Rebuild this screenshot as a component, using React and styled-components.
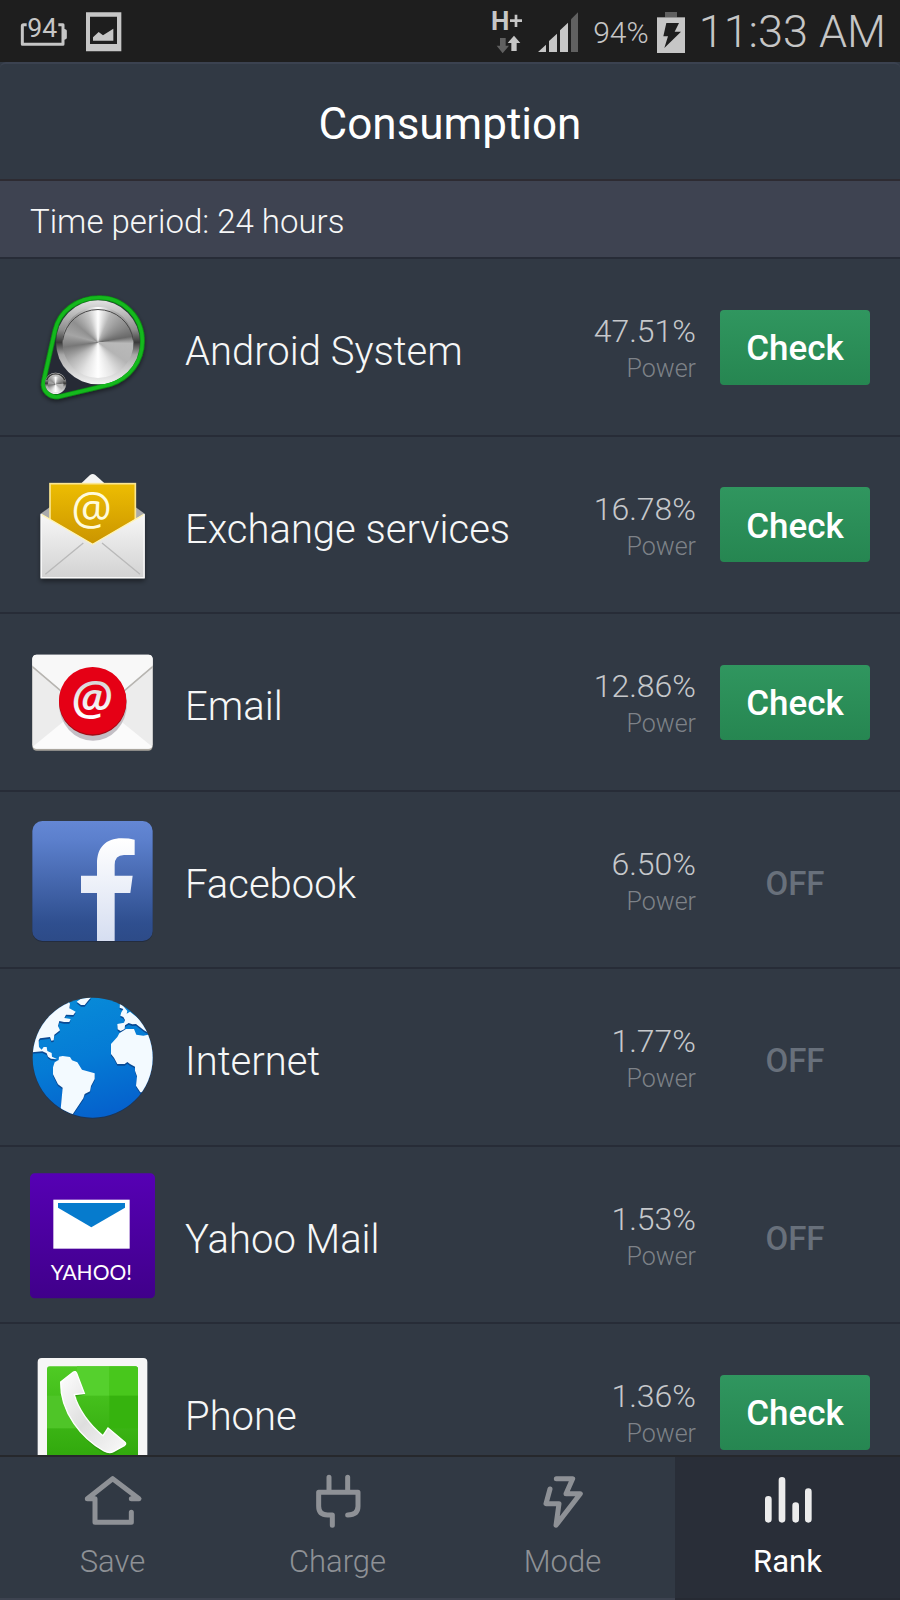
import React from 'react';
import styled, { createGlobalStyle, ThemeProvider } from 'styled-components';

const theme = {
  bg: '#313944',
  barBg: '#3e4351',
  activeBg: '#292e38',
  divider: '#272c37',
  text: '#f6f7f7',
  silver: '#c6c8cb',
  muted: '#7e8288',
  nav: '#8e9196',
  status: '#c6c6c6'
};

const GlobalStyle = createGlobalStyle`
  * {
    box-sizing: border-box;
  }

  body {
    margin: 0;
    font-family: Roboto, "Liberation Sans", sans-serif;
    background-color: #313944;
  }
`;

const Screen = styled.div`
  display: flex;
  flex-direction: column;
  height: 100vh;
  overflow: hidden;
  background-color: ${props => props.theme.bg};
  color: ${props => props.theme.text};
`;

const StyledStatusBar = styled.div`
  display: flex;
  justify-content: space-between;
  flex-shrink: 0;
  height: 62px;
  padding: 2px 14px 0 20px;
  background-color: #1e1e1e;
  color: ${props => props.theme.status};

  svg {
    display: block;
    flex-shrink: 0;
  }
`;

const StatusGroup = styled.div`
  display: flex;
  align-items: center;
  gap: ${props => props.$gap}px;
`;

const BatteryLevel = styled.span`
  padding-top: 2px;
  font-size: 30px;
  line-height: 36px;
  font-weight: 300;
`;

const BatteryGroup = styled.div`
  display: flex;
  align-items: center;
  gap: 8px;
`;

const Clock = styled.time`
  font-size: 45px;
  line-height: 56px;
  font-weight: 300;
  white-space: nowrap;
`;

const Header = styled.header`
  display: flex;
  align-items: center;
  justify-content: center;
  flex-shrink: 0;
  height: 119px;
  padding-top: 4px;
  border-top: 2px solid #3b4250;
  border-bottom: 2px solid #2d2b32;
  border-radius: 6px 6px 0 0;

  h1 {
    margin: 0;
    font-size: 44px;
    line-height: 56px;
    font-weight: 400;
    color: white;
  }
`;

const Period = styled.div`
  flex-shrink: 0;
  padding: 21px 30px 15px;
  border-bottom: 2px solid ${props => props.theme.divider};
  background-color: ${props => props.theme.barBg};
  font-size: 33px;
  line-height: 40px;
  font-weight: 300;
`;

const AppList = styled.ul`
  display: grid;
  grid-auto-rows: 178px 177px;
  align-content: start;
  flex: 1;
  min-height: 0;
  margin: 0;
  padding: 0;
  overflow-y: auto;
  scrollbar-width: none;
  list-style: none;
`;

const StyledAppRow = styled.li`
  display: flex;
  align-items: center;
  padding: 0 30px 0 28px;
  border-bottom: 2px solid ${props => props.theme.divider};

  > svg {
    flex-shrink: 0;
    width: 128px;
    height: 128px;
  }
`;

const AppName = styled.span`
  flex: 1;
  padding: 10px 0 0 29px;
  font-size: 40px;
  line-height: 48px;
  font-weight: 300;
`;

const Usage = styled.div`
  display: flex;
  flex-direction: column;
  align-items: flex-end;
  margin-right: 24px;
  padding-top: 6px;
  font-weight: 300;
`;

const Percent = styled.span`
  font-size: 32px;
  line-height: 38px;
  color: ${props => props.theme.silver};
`;

const UsageLabel = styled.span`
  font-size: 25px;
  line-height: 38px;
  color: ${props => props.theme.muted};
`;

const CheckButton = styled.button`
  width: 150px;
  height: 75px;
  padding: 4px 0 0;
  border: none;
  border-radius: 4px;
  background: linear-gradient(#30965f, #268651);
  font-family: inherit;
  font-size: 35px;
  line-height: 40px;
  font-weight: 500;
  color: white;
  cursor: pointer;
`;

const OffLabel = styled.span`
  width: 150px;
  padding-top: 8px;
  font-size: 33px;
  line-height: 40px;
  font-weight: 500;
  text-align: center;
  color: #68707b;
`;

const StyledTabBar = styled.nav`
  display: grid;
  grid-template-columns: repeat(4, 1fr);
  flex-shrink: 0;
  border-top: 2px solid #26282c;
`;

const Tab = styled.a`
  display: flex;
  flex-direction: column;
  align-items: center;
  height: 143px;
  padding-top: 17px;
  border-bottom: 2px solid ${props => (props.$active ? '#262a33' : '#3d4350')};
  background-color: ${props => (props.$active ? props.theme.activeBg : props.theme.bg)};
  color: ${props => (props.$active ? 'white' : props.theme.nav)};
  font-size: 31px;
  line-height: 36px;
  font-weight: ${props => (props.$active ? 400 : 300)};
  text-decoration: none;

  svg {
    width: 60px;
    height: 55px;
    margin-bottom: 15px;
    fill: none;
    stroke: ${props => (props.$active ? '#ececec' : props.theme.nav)};
    stroke-width: ${props => (props.$active ? 20 : 15)}px;
    stroke-linecap: round;
    stroke-linejoin: round;
  }
`;

const BrushedMetal = styled.div`
  height: 100%;
  border-radius: 50%;
  background: conic-gradient(
    #fff 0deg, #b5b5b5 25deg, #888 60deg, #696969 80deg, #b9b9b9 92deg,
    #b4b4b4 125deg, #e5e5e5 155deg, #fff 180deg, #e4e4e4 205deg, #b4b4b4 235deg,
    #777 262deg, #a5a5a5 285deg, #8f8f8f 310deg, #c4c4c4 340deg, #fff 360deg
  );
`;

const AndroidSystemIcon = () => (
  <svg viewBox="24 8 384 384" aria-hidden="true">
    <defs>
      <linearGradient id="dialRim" x1="0" y1="0" x2="0" y2="1">
        <stop offset="0" stopColor="#e2e2e2" />
        <stop offset="0.35" stopColor="#8d8d8d" />
        <stop offset="0.5" stopColor="#3a3a3a" />
        <stop offset="0.65" stopColor="#a8a8a8" />
        <stop offset="1" stopColor="#f4f4f4" />
      </linearGradient>
      <filter id="dialShadow" x="-20%" y="-20%" width="140%" height="140%">
        <feDropShadow dx="0" dy="6" stdDeviation="7" floodColor="#000" floodOpacity="0.5" />
      </filter>
    </defs>
    <path
      d="M105 150C118 92 172 52 238 52C310 52 367 110 367 182C367 243 328 294 271 312L120 348C90 355 65 332 71 302Z"
      fill="#252c36"
      stroke="#0b8d12"
      strokeWidth="15"
      filter="url(#dialShadow)"
    />
    <circle cx="234" cy="186" r="126" fill="url(#dialRim)" />
    <foreignObject x="127" y="79" width="214" height="214">
      <BrushedMetal />
    </foreignObject>
    <path d="M128 180A107 107 0 0 1 340 180" fill="none" stroke="#484848" strokeWidth="3" />
    <path
      d="M105 150C118 92 172 52 238 52C310 52 367 110 367 182C367 243 328 294 271 312L120 348C90 355 65 332 71 302Z"
      fill="none"
      stroke="#14b91d"
      strokeWidth="10"
    />
    <circle cx="107" cy="309" r="32" fill="url(#dialRim)" />
    <foreignObject x="83" y="288" width="48" height="48">
      <BrushedMetal />
    </foreignObject>
    <path d="M80 299A29 29 0 0 1 134 299" fill="none" stroke="#333" strokeWidth="4" />
  </svg>
);

const ExchangeIcon = () => (
  <svg viewBox="24 0 384 384" aria-hidden="true">
    <defs>
      <linearGradient id="letterGold" x1="0" y1="0" x2="0" y2="1">
        <stop offset="0" stopColor="#edbd02" />
        <stop offset="1" stopColor="#c99300" />
      </linearGradient>
      <linearGradient id="envelopeGray" x1="0" y1="0" x2="0" y2="1">
        <stop offset="0" stopColor="#f7f7f7" />
        <stop offset="1" stopColor="#d2d2d2" />
      </linearGradient>
      <filter id="envelopeShadow" x="-20%" y="-20%" width="140%" height="140%">
        <feDropShadow dx="0" dy="9" stdDeviation="8" floodColor="#000" floodOpacity="0.45" />
      </filter>
    </defs>
    <path d="M62 158L90 138H346L374 158V352H62Z" fill="#a9aaac" filter="url(#envelopeShadow)" />
    <path d="M176 74L210 42Q218 36 226 42L262 74Z" fill="#f4f4f4" />
    <rect x="90" y="68" width="256" height="190" fill="url(#letterGold)" stroke="#fbe691" strokeWidth="5" />
    <text x="215" y="192" fontSize="136" fontFamily="Open Sans, sans-serif" textAnchor="middle" fill="#fffbdc">@</text>
    <path d="M62 158L218 250L374 158V352H62Z" fill="url(#envelopeGray)" />
    <path d="M76 340L190 246M360 340L246 246" fill="none" stroke="#b9b9b9" strokeWidth="4" />
    <path d="M64 160L218 250L372 160" fill="none" stroke="#fff3b4" strokeWidth="4" />
    <path d="M64 160V350H372V160" fill="none" stroke="#f8f8f8" strokeWidth="4" />
  </svg>
);

const EmailIcon = () => (
  <svg viewBox="24 -8 384 384" aria-hidden="true">
    <defs>
      <linearGradient id="atSilver" x1="0" y1="0" x2="0" y2="1">
        <stop offset="0.2" stopColor="#d2d2d2" />
        <stop offset="0.8" stopColor="#ffffff" />
      </linearGradient>
    </defs>
    <rect x="37" y="44" width="361" height="286" rx="13" fill="#aaa69e" />
    <rect x="37" y="42" width="361" height="282" rx="13" fill="#ececec" />
    <path d="M38 318L170 210H264L397 318Q394 324 385 324H50Q41 324 38 318Z" fill="#fbfbfb" />
    <path d="M37 78L190 208H245L398 78" fill="none" stroke="#b7b5b1" strokeWidth="5" />
    <path d="M37 74V55Q37 42 50 42H385Q398 42 398 55V74L245 204H190Z" fill="#f8f8f8" />
    <ellipse cx="219" cy="190" rx="102" ry="110" fill="#c3bfc5" />
    <circle cx="218" cy="184" r="101" fill="#a30a14" />
    <circle cx="218" cy="180" r="101" fill="#e50015" />
    <text
      x="215"
      y="222"
      fontSize="142"
      fontFamily="Open Sans, sans-serif"
      fontStyle="italic"
      fontWeight="600"
      textAnchor="middle"
      fill="url(#atSilver)"
    >
      @
    </text>
  </svg>
);

const FacebookIcon = () => (
  <svg viewBox="24 15 384 384" aria-hidden="true">
    <defs>
      <linearGradient id="fbBlue" x1="0" y1="0" x2="0" y2="1">
        <stop offset="0" stopColor="#6487d4" />
        <stop offset="0.15" stopColor="#5c80cd" />
        <stop offset="0.85" stopColor="#2f4f8f" />
        <stop offset="1" stopColor="#2d4b88" />
      </linearGradient>
      <linearGradient id="fbWhite" x1="0" y1="0" x2="0" y2="1">
        <stop offset="0" stopColor="#ffffff" />
        <stop offset="1" stopColor="#d6def1" />
      </linearGradient>
    </defs>
    <rect x="37" y="32" width="361" height="361" rx="30" fill="#232c3e" />
    <rect x="37" y="30" width="361" height="360" rx="30" fill="url(#fbBlue)" />
    <path
      d="M231 390V246H183V194H231V158C231 110 257 82 305 82Q328 82 344 86V132H312Q284 132 284 162V194H338L331 246H284V390Z"
      fill="url(#fbWhite)"
    />
  </svg>
);

const Continents = () => (
  <>
    <path d="M30 30H135L150 54L148 68L167 78L160 88L138 87L133 97L152 100L148 109H132L118 106L114 121L120 134L103 147L101 164L94 165L90 154L60 158L56 164L57 184L65 192L71 184L80 184L82 196L95 202L96 213L111 220L93 219L84 213L80 203L67 197L30 200Z" />
    <path d="M99 245L104 230L116 223L117 213L128 211L150 214L156 224L172 230L186 252L224 263V280L213 301L210 317L194 325L190 338L155 390L122 370L128 306L114 296L99 266Z" />
    <path d="M300 50L314 66L322 76L320 84L330 78L370 110L400 150L372 134L348 115L337 116L326 112L315 119L314 130L302 136L293 131L292 115L312 111L315 103L310 94L301 90L304 80L310 70L299 66Z" />
    <path d="M273 175L292 154L298 143L318 130L342 130L349 147L370 150L420 140V320H361L348 300L351 272L345 255V243L330 235L322 229L314 235L292 235L282 216L273 205Z" />
    <path d="M170 48L190 34H214L203 47L194 58H183Z" />
  </>
);

const InternetIcon = () => (
  <svg viewBox="24 22 384 384" aria-hidden="true">
    <defs>
      <linearGradient id="ocean" x1="0.3" y1="0" x2="0.6" y2="1">
        <stop offset="0" stopColor="#088bd8" />
        <stop offset="0.5" stopColor="#057bd5" />
        <stop offset="1" stopColor="#0560cc" />
      </linearGradient>
      <clipPath id="globe">
        <circle cx="218" cy="216" r="180" />
      </clipPath>
    </defs>
    <circle cx="218" cy="219" r="180" fill="#1b3558" />
    <circle cx="218" cy="216" r="180" fill="url(#ocean)" />
    <g clipPath="url(#globe)">
      <g fill="#0a4a94" transform="translate(0 5)">
        <Continents />
      </g>
      <g fill="#f3faff">
        <Continents />
      </g>
    </g>
  </svg>
);

const YahooIcon = () => (
  <svg viewBox="24 30 384 384" aria-hidden="true">
    <defs>
      <linearGradient id="yahooPurple" x1="0" y1="0" x2="0" y2="1">
        <stop offset="0" stopColor="#5600b4" />
        <stop offset="1" stopColor="#40008a" />
      </linearGradient>
    </defs>
    <rect x="30" y="37" width="375" height="375" rx="14" fill="url(#yahooPurple)" />
    <rect x="100" y="116" width="229" height="147" fill="#fff" />
    <path d="M114 126H315V140L214 199L114 140Z" fill="#067bcd" />
    <text x="214" y="358" fontSize="63" fontFamily="Lato, sans-serif" textAnchor="middle" fill="#fff">
      YAHOO!
    </text>
  </svg>
);

const PhoneIcon = () => (
  <svg viewBox="24 22 384 384" aria-hidden="true">
    <defs>
      <linearGradient id="phoneGreen" x1="0" y1="0" x2="0" y2="1">
        <stop offset="0" stopColor="#4fcb24" />
        <stop offset="1" stopColor="#2fa60b" />
      </linearGradient>
      <linearGradient id="handset" x1="0" y1="0" x2="1" y2="1">
        <stop offset="0" stopColor="#ffffff" />
        <stop offset="0.5" stopColor="#dedede" />
        <stop offset="1" stopColor="#fafafa" />
      </linearGradient>
    </defs>
    <rect x="53" y="52" width="329" height="340" rx="12" fill="#f6f6f6" />
    <rect x="81" y="77" width="273" height="290" rx="8" fill="url(#phoneGreen)" />
    <rect x="171" y="77" width="97" height="88" fill="#55d02d" />
    <path d="M268 77H346Q354 77 354 85V165H268Z" fill="#48c71c" />
    <rect x="268" y="165" width="86" height="98" fill="#36b30e" />
    <rect x="81" y="165" width="90" height="98" fill="#4fc528" />
    <path
      d="M123 130L168 98L194 162L166 168C178 210 210 258 250 292L268 268L318 312L284 340Q268 346 252 338C186 300 130 220 123 130Z"
      fill="#248a08"
      opacity="0.6"
    />
    <path
      d="M122 124L160 94Q167 90 170 98L193 158L163 162C174 204 208 252 249 285L264 262L314 304Q320 309 314 314L280 333Q268 339 252 331C186 294 120 216 122 124Z"
      fill="url(#handset)"
      stroke="#fff"
      strokeWidth="4"
    />
  </svg>
);

const StatusBar = () => (
  <StyledStatusBar>
    <StatusGroup $gap={17}>
      <svg width="48" height="40" viewBox="60 36 144 120" aria-hidden="true">
        <path
          d="M80 74H71Q67 74 67 78V133H189V74H175M189 90L196 93V113L189 117"
          fill="none"
          stroke="#c6c6c6"
          strokeWidth="9"
          strokeLinejoin="round"
        />
        <text x="127" y="112" fontSize="80" fontFamily="Roboto, sans-serif" textAnchor="middle" fill="#c6c6c6">94</text>
      </svg>
      <svg width="37" height="40" viewBox="255 36 111 120" aria-hidden="true">
        <path d="M258 37H364V154H258ZM270 50V132H351V50Z" fill="#c6c6c6" fillRule="evenodd" />
        <path d="M279 122V112L296 96L309 106L340 86V122Z" fill="#c6c6c6" />
      </svg>
    </StatusGroup>
    <StatusGroup $gap={14}>
      <svg width="35" height="60" viewBox="120 6 105 180" aria-hidden="true">
        <text x="126" y="90" fontSize="78" fontFamily="Roboto, sans-serif" fontWeight="700" fill="#c6c6c6">H</text>
        <path d="M183 62H219M201 44V81" stroke="#c6c6c6" strokeWidth="8" />
        <path d="M153 114H170V137H180L161 160L143 137H153Z" fill="#606060" />
        <path d="M187 153V129H176L195 107L214 129H203V153Z" fill="#c6c6c6" />
      </svg>
      <svg width="41" height="40" viewBox="264 36 123 120" aria-hidden="true">
        <path d="M264 156L288 134V156ZM297 156V123L321 101V156ZM330 156V91L354 68V156Z" fill="#c6c6c6" />
        <path d="M363 156V58L384 37V156Z" fill="#606060" />
      </svg>
      <BatteryGroup>
        <BatteryLevel>94%</BatteryLevel>
        <svg width="28" height="41" viewBox="618 33 84 123" aria-hidden="true">
          <path d="M642 33H678V49H642Z" fill="#606060" />
          <path d="M618 49H702V156H618Z" fill="#c6c6c6" />
          <path d="M646 66H684L671 92H690L640 141L651 106H637Z" fill="#1e1e1e" />
        </svg>
      </BatteryGroup>
      <Clock>11:33 AM</Clock>
    </StatusGroup>
  </StyledStatusBar>
);

const AppRow = ({ app: { name, percent, canCheck, Icon } }) => (
  <StyledAppRow>
    <Icon />
    <AppName>{name}</AppName>
    <Usage>
      <Percent>{percent}</Percent>
      <UsageLabel>Power</UsageLabel>
    </Usage>
    {canCheck ? <CheckButton type="button">Check</CheckButton> : <OffLabel>OFF</OffLabel>}
  </StyledAppRow>
);

const SaveIcon = () => (
  <svg viewBox="247 102 180 165" aria-hidden="true">
    <path d="M392 217V247H283V176H260L336 116L415 176H392" />
  </svg>
);

const ChargeIcon = () => (
  <svg viewBox="922 102 180 165" aria-hidden="true">
    <path d="M985 112V157M1041 112V157M995 256V225H981Q954 225 954 199V157H1072V199Q1072 225 1041 225" />
  </svg>
);

const ModeIcon = () => (
  <svg viewBox="247 102 180 165" aria-hidden="true">
    <path d="M298 147L286 191H325L316 256L389 161H346L366 116H317" />
  </svg>
);

const RankIcon = () => (
  <svg viewBox="922 102 180 165" aria-hidden="true">
    <path d="M953 178V238M994 121V238M1035 197V238M1073 155V238" />
  </svg>
);

const apps = [
  { name: 'Android System', percent: '47.51%', canCheck: true, Icon: AndroidSystemIcon },
  { name: 'Exchange services', percent: '16.78%', canCheck: true, Icon: ExchangeIcon },
  { name: 'Email', percent: '12.86%', canCheck: true, Icon: EmailIcon },
  { name: 'Facebook', percent: '6.50%', canCheck: false, Icon: FacebookIcon },
  { name: 'Internet', percent: '1.77%', canCheck: false, Icon: InternetIcon },
  { name: 'Yahoo Mail', percent: '1.53%', canCheck: false, Icon: YahooIcon },
  { name: 'Phone', percent: '1.36%', canCheck: true, Icon: PhoneIcon }
];

const tabs = [
  { label: 'Save', Icon: SaveIcon },
  { label: 'Charge', Icon: ChargeIcon },
  { label: 'Mode', Icon: ModeIcon },
  { label: 'Rank', Icon: RankIcon, active: true }
];

const App = () => (
  <ThemeProvider theme={theme}>
    <GlobalStyle />
    <Screen>
      <StatusBar />
      <Header>
        <h1>Consumption</h1>
      </Header>
      <Period>Time period: 24 hours</Period>
      <AppList>
        {apps.map(app => <AppRow key={app.name} app={app} />)}
      </AppList>
      <StyledTabBar>
        {tabs.map(({ label, Icon, active }) => (
          <Tab key={label} href={`#${label.toLowerCase()}`} $active={active} aria-current={active ? 'page' : undefined}>
            <Icon />
            {label}
          </Tab>
        ))}
      </StyledTabBar>
    </Screen>
  </ThemeProvider>
);

export default App;
